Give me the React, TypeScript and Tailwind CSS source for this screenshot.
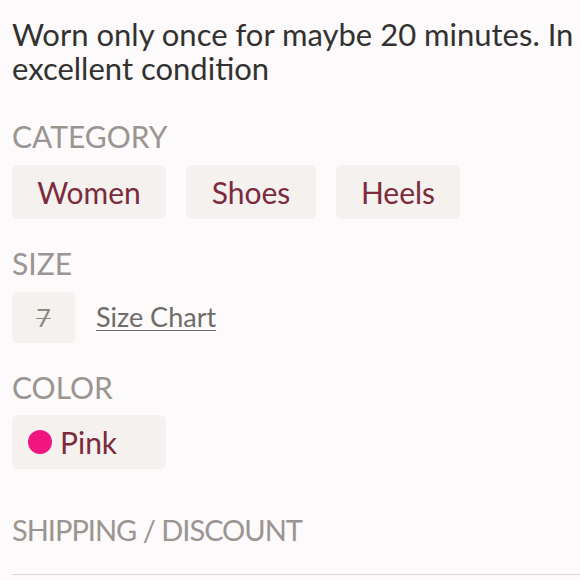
import React from 'react';

const Chip: React.FC<{ children: React.ReactNode; className?: string }> = ({ children, className = '' }) => (
  <div className={`flex h-[54px] items-center rounded-md bg-[#f4f1ef] text-[30px] text-[#7b2b3b] ${className}`}>
    {children}
  </div>
);

const Heading: React.FC<{ children: React.ReactNode; className?: string }> = ({ children, className = '' }) => (
  <h3 className={`text-[30px] leading-[32px] text-[#9a9591] ${className}`}>{children}</h3>
);

export default function App() {
  return (
    <div className="min-h-screen bg-[#fcfafa] pl-3 pt-[17px] font-['Lato',sans-serif]">
      <p className="text-[31px] leading-[34px] text-[#333130]">
        Worn only once for maybe 20 minutes. In excellent condition
      </p>

      {/* Category */}
      <Heading className="mt-[35px]">CATEGORY</Heading>
      <div className="mt-[13px] flex gap-5">
        <Chip className="w-[154px] justify-center">Women</Chip>
        <Chip className="w-[130px] justify-center">Shoes</Chip>
        <Chip className="w-[124px] justify-center">Heels</Chip>
      </div>

      {/* Size */}
      <Heading className="mt-[28px]">SIZE</Heading>
      <div className="mt-[13px] flex items-center gap-[21px]">
        <div className="flex h-[51px] w-[63px] items-center justify-center rounded-md bg-[#f4f1ef] text-[25px] text-[#8c8782] line-through decoration-1">
          7
        </div>
        <span className="text-[27px] text-[#6f6b67] underline decoration-1 underline-offset-[3px]">Size Chart</span>
      </div>

      {/* Color */}
      <Heading className="mt-[28px]">COLOR</Heading>
      <div className="mt-[12px] flex">
        <Chip className="w-[154px] gap-2 pl-4">
          <span className="h-6 w-6 rounded-full bg-[#f0157f]" />
          Pink
        </Chip>
      </div>

      {/* Shipping */}
      <Heading className="mt-[45px] !text-[29px] tracking-[-1px]">SHIPPING / DISCOUNT</Heading>
      <div className="mt-[28px] h-px bg-[#dcd8d6]" />
    </div>
  );
}
